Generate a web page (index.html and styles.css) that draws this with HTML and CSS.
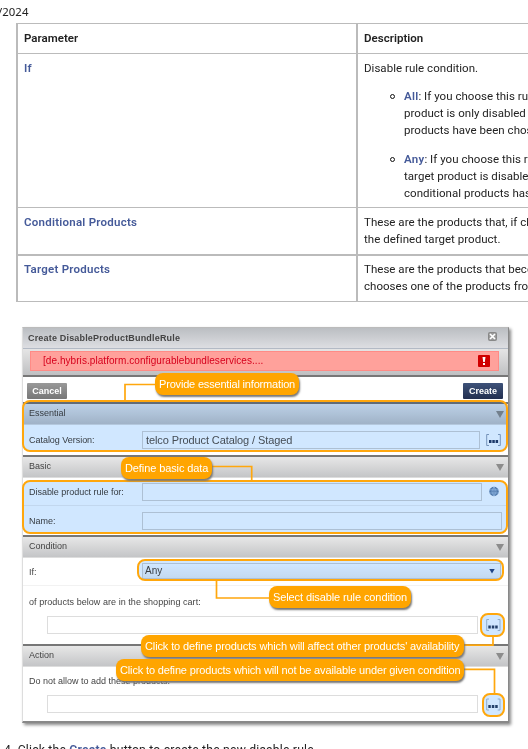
FILE: index.html
```html
<!DOCTYPE html>
<html lang="en">
<head>
<meta charset="utf-8">
<title>Disable rule</title>
<link rel="stylesheet" href="styles.css">
</head>
<body>
<div class="date">/2024</div>
<div class="params">
  <div class="row head"><div class="cell"><b>Parameter</b></div><div class="cell"><b>Description</b></div></div>
  <div class="row if"><div class="cell"><b class="term">If</b></div><div class="cell">
    <p>Disable rule condition.</p>
    <ul>
      <li><b class="term">All</b>: If you choose this rule,<br>product is only disabled if<br>products have been chosen</li>
      <li><b class="term">Any</b>: If you choose this rule,<br>target product is disabled<br>conditional products has</li>
    </ul></div></div>
  <div class="row cond"><div class="cell"><b class="term">Conditional Products</b></div><div class="cell">These are the products that, if chosen,<br>the defined target product.</div></div>
  <div class="row target"><div class="cell"><b class="term">Target Products</b></div><div class="cell">These are the products that become<br>chooses one of the products from</div></div>
</div>

<div class="dialog">
  <div class="titlebar"><b>Create DisableProductBundleRule</b>
    <svg class="close" width="9" height="9" viewBox="0 0 9 9"><rect x=".5" y=".5" width="8" height="8" rx="1" fill="#999" stroke="#888"/><path d="M2 2l5 5M7 2l-5 5" stroke="#fff" stroke-width="1.7"/></svg>
  </div>
  <div class="alert-area"><div class="alert"><span>[de.hybris.platform.configurablebundleservices....</span>
    <svg width="12" height="12" viewBox="0 0 12 12"><rect width="12" height="12" rx="1" fill="#d00000"/><path d="M4.5 2h3L6.8 7H5.2zM5 8h2v2H5z" fill="#fff"/></svg></div></div>
  <div class="toolbar"><span class="btn cancel">Cancel</span><span class="btn create">Create</span></div>
  <div class="bar"><span>Essential</span><i class="arrow"></i></div>
  <div class="field essential"><label>Catalog Version:</label><div class="input big catalog">telco Product Catalog / Staged</div><svg class="dots" width="15" height="12" viewBox="0 0 15 12"><path d="M3 .5H.7v11H3M12 .5h2.3v11H12" fill="none" stroke="#8298b2" stroke-width=".9"/><path d="M3 6h2.5v3H3zM6.3 6h2.5v3H6.3zM9.6 6h2.5v3H9.6z" fill="#24416b"/></svg></div>
  <div class="bar"><span>Basic</span><i class="arrow"></i></div>
  <div class="field first"><label>Disable product rule for:</label><div class="input rulefor"></div><svg class="globe" width="10" height="11" viewBox="0 0 10 11"><circle cx="5" cy="5.5" r="4.7" fill="#6084aa"/><path d="M0 3.8h10M0 7h10M5 1v9M5 1Q1 5.5 5 10M5 1Q9 5.5 5 10" fill="none" stroke="#bcd4eb" stroke-width=".6"/></svg></div>
  <div class="field second"><label>Name:</label><div class="input name"></div></div>
  <div class="bar"><span>Condition</span><i class="arrow"></i></div>
  <div class="field ifrow"><label>If:</label><div class="input select"><span>Any</span><i></i></div></div>
  <div class="refs"><div class="caption cart">of products below are in the shopping cart:</div><div class="input ref"></div></div>
  <div class="bar"><span>Action</span><i class="arrow"></i></div>
  <div class="refs action"><div class="caption add">Do not allow to add these products:</div><div class="input ref"></div></div>
</div>

<div class="mark m-essential"></div>
<div class="mark m-basic"></div>
<div class="mark m-select"></div>
<div class="mark m-ref1"></div>
<div class="mark m-ref2"></div>
<svg class="lines" width="528" height="749" viewBox="0 0 528 749">
  <path d="M125 401v-16.5h30M212 466.500h39.700V481M216.500 581v17h53M493 636v9.200h-30M494.500 694v-24.700h-32" fill="none" stroke="#ffa70d" stroke-width="1.7"/>
  <g id="d"><path d="M489 619.5h-2.300v11h2.300M497.700 619.500h2.300v11h-2.300" fill="none" stroke="#8ba7c5" stroke-width=".9"/><path d="M488.300 625.500h2.500v3h-2.500zM491.800 625.500h2.500v3h-2.500zM495.200 625.500h2.500v3h-2.500z" fill="#24416b"/></g>
  <use href="#d" y="79.500"/>
</svg>
<div class="tip t1"><span>Provide essential information</span></div>
<div class="tip t2"><span>Define basic data</span></div>
<div class="tip t3"><span>Select disable rule condition</span></div>
<div class="tip t4"><span>Click to define products which will affect other products' availability</span></div>
<div class="tip t5"><span>Click to define products which will not be available under given condition</span></div>

<div class="step">4. Click the <b class="term">Create</b> button to create the new disable rule.</div>
</body>
</html>
```
FILE: styles.css
```css
* { box-sizing: border-box; }
html, body { height: 749px; overflow: hidden; }
body { margin: 0; background: #fff; color: #222; font: 11.5px/17px Roboto, "Noto Sans", sans-serif; letter-spacing: .03px; position: relative; }
b { font-weight: 600; }
.term { color: #455a99; }
.date { height: 23px; padding-top: 3px; margin-left: -2px; font-family: "Noto Sans", sans-serif; font-size: 11.4px; }
.params { width: 512px; overflow: hidden; margin-left: 16px; height: 280px; border-top: 1px solid #bbb; }
.params .term { letter-spacing: .25px; }
.row { display: grid; grid-template-columns: 340px 380px; grid-template-rows: 100%; }
.cell { border-left: 2px solid #bbb; border-bottom: 1px solid #bbb; padding: 6px 6px 0; white-space: nowrap; }
.head { height: 30px; }
.if { height: 154px; }
.cond { height: 48px; }
.cond .cell { border-bottom-width: 2px; }
.target { height: 46px; }
.target .cell { padding-top: 5px; }
.if p { margin: 0; }
ul { list-style: none; margin: 11px 0 0 40px; padding: 0; }
li { position: relative; margin-bottom: 12px; }
li:last-child { margin-bottom: 0; }
li::before { content: ""; box-sizing: border-box; position: absolute; left: -14px; top: 6px; width: 5px; height: 5px; border: 1px solid #111; border-radius: 50%; }

.dialog { margin: 24px 0 0 22px; width: 487px; height: 396px; border: 1px solid #ddd; border-top-color: #bbb; border-right-color: #888; border-bottom: 2px solid #888; background: #fff; box-shadow: 2px 2px 3px #888; color: #444; font: 9px/12px "Liberation Sans", sans-serif; letter-spacing: 0; }
.titlebar { height: 21px; background: linear-gradient(#bbbec2, #dddee2); border-bottom: 1px solid #b3bac5; display: flex; justify-content: space-between; padding: 4px 11px 0 5px; letter-spacing: .18px; }
.titlebar b { font-weight: 700; }
.alert-area { height: 28px; background: linear-gradient(#e5e5e5, #bfc0c2); border-bottom: 2px solid #777; padding: 2px 9px 0 7px; }
.alert { height: 20px; border: 1px solid #ff8b86; background: #ffa19b; color: #d6001c; display: flex; justify-content: space-between; align-items: center; padding: 0 8px 1px 12px; font-size: 10px; letter-spacing: .06px; }
.toolbar { height: 25px; display: flex; justify-content: space-between; padding: 6px 5px 0 4px; }
.btn { width: 40px; height: 16px; line-height: 16px; text-align: center; font-weight: 700; color: #fff; border-radius: 1px; background: linear-gradient(#999, #777); }
.btn.create { background: linear-gradient(#3e5279, #222f50); }
.bar { height: 23px; border-top: 2px solid #777; border-bottom: 1px solid #ddd; background: linear-gradient(#e7e7e7, #c4c5c7); display: flex; justify-content: space-between; padding: 3px 4px 0 6px; }
.arrow { margin-top: 4px; width: 8px; height: 7px; background: #8c8c8c; clip-path: polygon(0 0, 100% 0, 50% 100%); }
.field { display: flex; align-items: center; padding-left: 6px; }
.field label { width: 113px; letter-spacing: -.03px; }
.input { height: 18px; border: 1px solid #d4d4d4; }
.essential { height: 30px; }
.catalog { width: 338px; font-size: 11px; line-height: 16px; padding-left: 3px; letter-spacing: -.1px; color: #555; }
.dots { margin-left: 6px; }
.first { height: 28px; border-bottom: 1px solid #eee; }
.rulefor { width: 340px; }
.globe { margin-left: 7px; }
.second { height: 29px; }
.name { width: 360px; }
.ifrow { height: 28px; border-bottom: 1px solid #f2f2f2; }
.select { width: 359px; height: 16px; margin-bottom: 1px; font-size: 10px; display: flex; justify-content: space-between; align-items: center; padding: 0 5px 0 2px; background: linear-gradient(#fff, #f0f0f0); }
.select i { width: 6px; height: 5px; background: #244a85; clip-path: polygon(0 0, 100% 0, 50% 100%); }
.refs { height: 58px; padding: 10px 0 0 6px; }
.caption { height: 20px; white-space: nowrap; }
.cart { letter-spacing: .05px; }
.ref { width: 431px; margin-left: 18px; border-color: #ddd; }
.action { padding-top: 8px; height: 56px; }

.mark { position: absolute; border: 2px solid #ffa70d; border-radius: 8px; }
.mark::before { content: ""; position: absolute; inset: 0; border-radius: 6px; background: #d0e7ff; mix-blend-mode: multiply; }
.m-essential { left: 22px; top: 400px; width: 486px; height: 52px; }
.m-basic { left: 22px; top: 480px; width: 486px; height: 54px; }
.m-select { left: 137px; top: 559px; width: 367px; height: 22px; }
.m-ref1 { left: 480px; top: 613px; width: 25px; height: 24px; }
.m-ref2 { left: 482px; top: 693px; width: 23px; height: 24px; }
.lines { position: absolute; left: 0; top: 0; }
.tip { position: absolute; height: 22px; border-radius: 8px; background: #ffa500; box-shadow: 1px 2px 2px #777; color: #fff; font: 11px/22px "Liberation Sans", sans-serif; letter-spacing: -.1px; white-space: nowrap; padding-left: 4px; }
.t1 { left: 155px; top: 373px; width: 144px; letter-spacing: -.18px; }
.t2 { left: 121px; top: 457px; width: 91px; }
.t3 { left: 269px; top: 586px; width: 142px; }
.t4 { left: 141px; top: 635px; width: 323px; letter-spacing: -.12px; }
.t5 { left: 116px; top: 659px; width: 348px; letter-spacing: -.15px; }
.step { margin: 19px 0 0 4px; font-size: 12.2px; letter-spacing: .2px; white-space: nowrap; }
```
